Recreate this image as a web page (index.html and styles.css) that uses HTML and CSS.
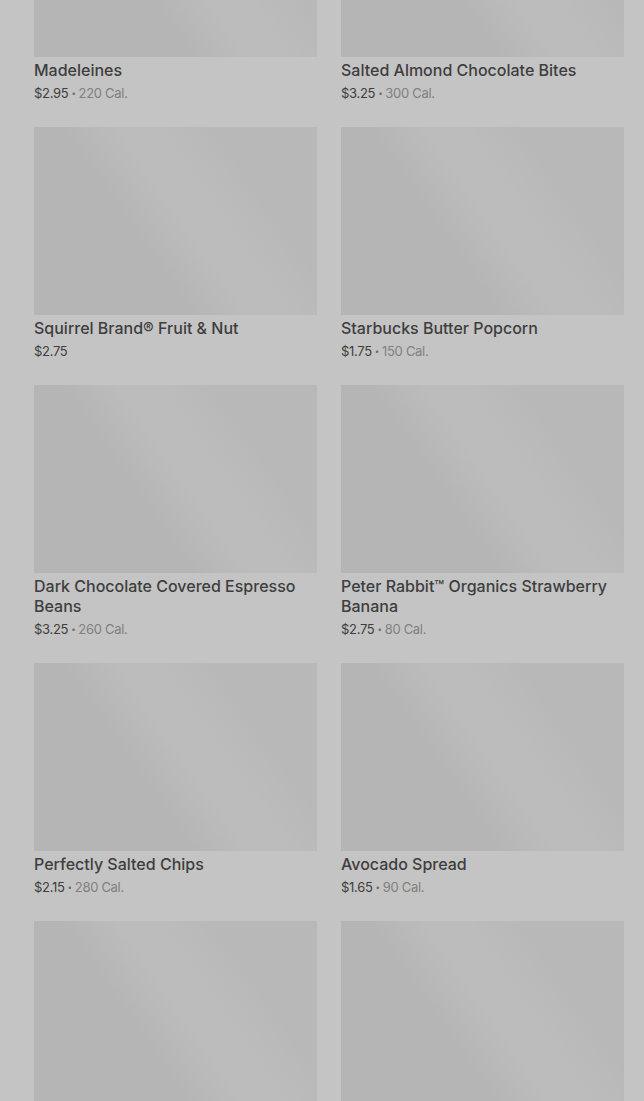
FILE: index.html
```html
<!DOCTYPE html>
<html lang="en">
<head>
    <meta charset="UTF-8">
    <meta name="viewport" content="width=device-width, initial-scale=1.0">
    <title>Snacks</title>
    <link rel="stylesheet" href="styles.css">
</head>
<body>
    <div class="overlay">
        <div class="grid">
            <div class="item">
                <div class="photo"></div>
                <div class="name">Madeleines</div>
                <div class="meta">$2.95<span class="dot">•</span><span class="cal">220 Cal.</span></div>
            </div>
            <div class="item">
                <div class="photo"></div>
                <div class="name">Salted Almond Chocolate Bites</div>
                <div class="meta">$3.25<span class="dot">•</span><span class="cal">300 Cal.</span></div>
            </div>
            <div class="item">
                <div class="photo"></div>
                <div class="name">Squirrel Brand® Fruit &amp; Nut</div>
                <div class="meta">$2.75</div>
            </div>
            <div class="item">
                <div class="photo"></div>
                <div class="name">Starbucks Butter Popcorn</div>
                <div class="meta">$1.75<span class="dot">•</span><span class="cal">150 Cal.</span></div>
            </div>
            <div class="item">
                <div class="photo"></div>
                <div class="name">Dark Chocolate Covered Espresso Beans</div>
                <div class="meta">$3.25<span class="dot">•</span><span class="cal">260 Cal.</span></div>
            </div>
            <div class="item">
                <div class="photo"></div>
                <div class="name">Peter Rabbit™ Organics Strawberry Banana</div>
                <div class="meta">$2.75<span class="dot">•</span><span class="cal">80 Cal.</span></div>
            </div>
            <div class="item">
                <div class="photo"></div>
                <div class="name">Perfectly Salted Chips</div>
                <div class="meta">$2.15<span class="dot">•</span><span class="cal">280 Cal.</span></div>
            </div>
            <div class="item">
                <div class="photo"></div>
                <div class="name">Avocado Spread</div>
                <div class="meta">$1.65<span class="dot">•</span><span class="cal">90 Cal.</span></div>
            </div>
            <div class="item">
                <div class="photo"></div>
            </div>
            <div class="item">
                <div class="photo"></div>
            </div>
        </div>
    </div>
</body>
</html>
```

FILE: styles.css
```css
html, body {
    margin: 0;
    padding: 0;
    height: 100%;
    overflow: hidden;
}

body {
    font-family: Inter, "Noto Sans", sans-serif;
    background-color: #c4c4c4;
}

.overlay {
    padding: 0 20px 0 34px;
}

.grid {
    display: grid;
    grid-template-columns: 283px 283px;
    column-gap: 24px;
    row-gap: 24px;
    margin-top: -131px;
}

.photo {
    height: 188px;
    background: linear-gradient(55deg, #b5b5b5 0%, #b5b5b5 38%, #bcbcbc 52%, #bcbcbc 62%, #b8b8b8 75%, #b8b8b8 100%);
}

.name {
    margin-top: 3px;
    font-size: 16px;
    font-weight: 500;
    line-height: 20px;
    color: #3e3e3e;
}

.meta {
    margin-top: 3px;
    font-size: 13px;
    line-height: 20px;
    letter-spacing: -0.3px;
    color: #3e3e3e;
}

.dot {
    margin: 0 3px;
    font-size: 8px;
    vertical-align: 2px;
    color: #6e6e6e;
}

.cal {
    color: #808080;
}
```
